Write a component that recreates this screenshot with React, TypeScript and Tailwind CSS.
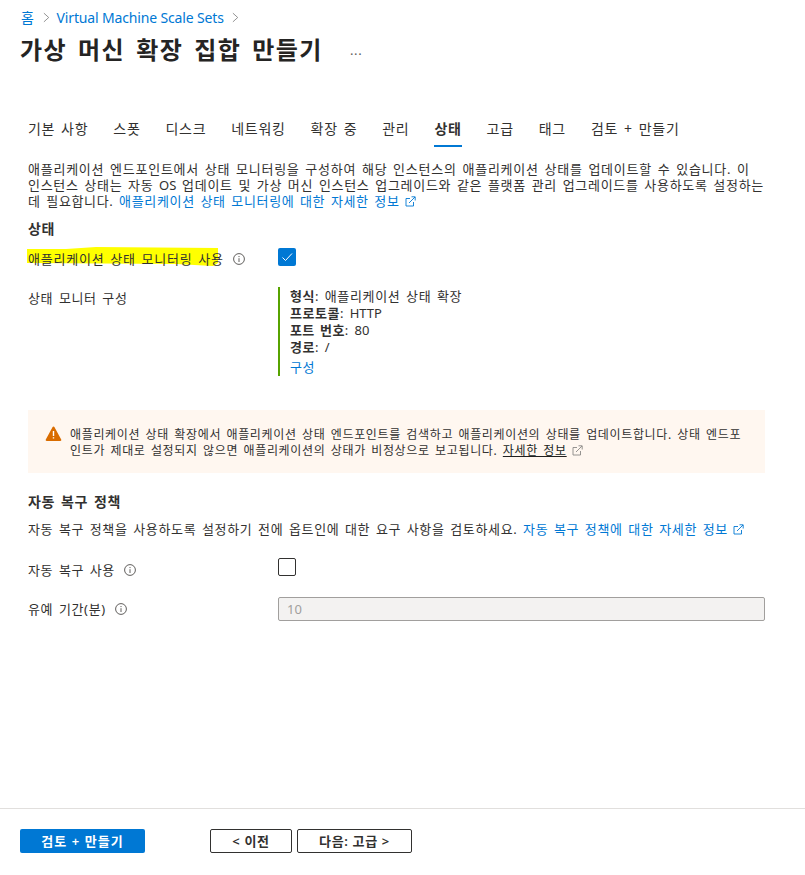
import React from "react";

const font = { fontFamily: '"Noto Sans", "Noto Sans CJK KR", sans-serif' };

function L({ children }: { children: React.ReactNode }) {
  return <span className="tracking-normal [word-spacing:0]">{children}</span>;
}

function Ext({ className = "" }: { className?: string }) {
  return (
    <svg viewBox="0 0 11 11" className={`inline-block w-[11px] h-[11px] ml-[5px] align-[-1px] ${className}`} fill="none" stroke="currentColor" strokeWidth="0.9">
      <path d="M5 2.5H1v7.5h7.5V6" />
      <path d="M4 7l6-6M6.5 .8H10.2V4.5" />
    </svg>
  );
}

function Info() {
  return (
    <svg viewBox="0 0 12 12" className="w-[12px] h-[12px] shrink-0 text-[#605e5c]" fill="none" stroke="currentColor">
      <circle cx="6" cy="6" r="5.4" strokeWidth="1" />
      <path d="M6 5.2V9" strokeWidth="1" />
      <path d="M6 3v1.1" strokeWidth="1" />
    </svg>
  );
}

function Chevron() {
  return (
    <svg viewBox="0 0 8 12" className="w-[7px] h-[11px] text-[#777]" fill="none" stroke="currentColor" strokeWidth="0.9">
      <path d="M1 1l5.5 5L1 11" />
    </svg>
  );
}

const tabs = ["기본 사항", "스폿", "디스크", "네트워킹", "확장 중", "관리", "상태", "고급", "태그", "검토 + 만들기"];

export default function App() {
  return (
    <div style={font} className="relative flex flex-col h-[875px] w-[805px] bg-white text-[#323130] text-[13px] leading-[16px] overflow-hidden tracking-[0.05em] [word-spacing:0.125em]">
      <div className="flex-1 pl-[20px] pr-[40px]">
        <nav className="flex items-center gap-[8px] pt-[9px] h-[26px] text-[14px] text-[#0078d4]">
          <span className="ml-[1px]">홈</span>
          <Chevron />
          <span className="tracking-[-0.15px] [word-spacing:0] -ml-[1px]">Virtual Machine Scale Sets</span>
          <Chevron />
        </nav>
        <div className="flex items-center h-[48px]">
          <h1 className="text-[24px] leading-[32px] font-semibold text-[#252423] tracking-[0.06em] [word-spacing:0.14em]">가상 머신 확장 집합 만들기</h1>
          <span className="ml-[27px] text-[13px] text-[#605e5c]">...</span>
        </div>
        <div className="mt-[37px] ml-[8px] flex gap-[25px] h-[38px] text-[14px] items-start pt-[8px] tracking-[0.05em]">
          {tabs.map((t) =>
            t === "상태" ? (
              <span key={t} className="relative font-semibold leading-[20px]">
                {t}
                <span className="absolute left-0 right-0 top-[26px] h-[2px] bg-[#0078d4]" />
              </span>
            ) : (
              <span key={t} className="leading-[20px]">{t}</span>
            )
          )}
        </div>
        <div className="ml-[8px] mt-[12px] w-[745px]">
          <p>
            <span className="block tracking-[0.058em]">애플리케이션 엔드포인트에서 상태 모니터링을 구성하여 해당 인스턴스의 애플리케이션 상태를 업데이트할 수 있습니다. 이</span>
            <span className="block tracking-[0.054em]">인스턴스 상태는 자동 <L>OS</L> 업데이트 및 가상 머신 인스턴스 업그레이드와 같은 플랫폼 관리 업그레이드를 사용하도록 설정하는</span>
            <span className="block">데 필요합니다.{" "}
            <span className="text-[#0078d4]">애플리케이션 상태 모니터링에 대한 자세한 정보<Ext /></span></span>
          </p>
          <h2 className="mt-[10px] text-[14px] leading-[20px] font-semibold">상태</h2>
          <div className="relative flex mt-[8px] h-[24px] items-center">
            <svg className="absolute left-[-2px] top-[-1px] w-[194px] h-[22px]" viewBox="0 0 194 22">
              <path d="M1 3 L40 3 L70 1 L192 2 L192 17 L187 20 L150 18 L1 17 Z" fill="#ffff00" />
            </svg>
            <div className="relative flex items-center w-[250px] gap-[9px] tracking-[0.06em]">
              <span>애플리케이션 상태 모니터링 사용</span>
              <Info />
            </div>
            <span className="relative w-[18px] h-[18px] rounded-[2px] bg-[#0078d4] flex items-center justify-center -mt-[4px]">
              <svg viewBox="0 0 12 12" className="w-[12px] h-[12px] text-white" fill="none" stroke="currentColor" strokeWidth="1">
                <path d="M1.5 6.5l3 3L11 2.5" />
              </svg>
            </span>
          </div>
          <div className="flex mt-[16px]">
            <div className="w-[250px] pt-[3px]">상태 모니터 구성</div>
            <div className="border-l-[2px] border-[#57a300] pl-[10px] h-[89px] w-[220px] pt-[1px]">
              <div className="leading-[17px]"><b className="font-semibold tracking-[0.04em]">형식</b>: 애플리케이션 상태 확장</div>
              <div className="leading-[17px]"><b className="font-semibold tracking-[0.04em]">프로토콜</b>: <L>HTTP</L></div>
              <div className="leading-[17px]"><b className="font-semibold tracking-[0.03em]">포트 번호</b>: <L>80</L></div>
              <div className="leading-[17px]"><b className="font-semibold tracking-[0.04em]">경로</b>: /</div>
              <div className="mt-[3px] leading-[17px] text-[#0078d4]">구성</div>
            </div>
          </div>
        </div>
        <div className="ml-[8px] mt-[34px] w-[737px] h-[63px] bg-[#fff7f0] flex pl-[17px] pr-[20px] pt-[15px] gap-[8px]">
          <svg viewBox="0 0 16 15" className="w-[17px] h-[15px] shrink-0 mt-[1px]">
            <path d="M8 .5a1 1 0 0 1 .9.5l6.8 12.4a1 1 0 0 1-.9 1.5H1.2a1 1 0 0 1-.9-1.5L7.1 1A1 1 0 0 1 8 .5z" fill="#d96c00" />
            <path d="M8 5v5M8 11.2v1.4" stroke="#fff" strokeWidth="1.4" />
          </svg>
          <p className="text-[12px] leading-[16px] pt-[2px]">
            애플리케이션 상태 확장에서 애플리케이션 상태 엔드포인트를 검색하고 애플리케이션의 상태를 업데이트합니다. 상태 엔드포인트가 제대로 설정되지 않으면 애플리케이션의 상태가 비정상으로 보고됩니다.{" "}
            <span className="underline text-[#201f1e]">자세한 정보</span>
            <Ext className="text-[#8a8886]" />
          </p>
        </div>
        <h2 className="ml-[8px] mt-[19px] text-[14px] leading-[20px] font-semibold">자동 복구 정책</h2>
        <p className="ml-[8px] mt-[9px]">
          자동 복구 정책을 사용하도록 설정하기 전에 옵트인에 대한 요구 사항을 검토하세요.{" "}
          <span className="text-[#0078d4]">자동 복구 정책에 대한 자세한 정보<Ext /></span>
        </p>
        <div className="ml-[8px] flex items-center mt-[19px] h-[24px]">
          <div className="w-[250px] flex items-center gap-[9px] pt-[4px]">
            <span>자동 복구 사용</span>
            <Info />
          </div>
          <span className="w-[18px] h-[18px] rounded-[2px] border border-[#323130] bg-white -mt-[2px]" />
        </div>
        <div className="ml-[8px] flex items-center mt-[17px]">
          <div className="w-[250px] flex items-center gap-[9px]">
            <span>유예 기간(분)</span>
            <Info />
          </div>
          <div className="w-[487px] h-[24px] rounded-[2px] border border-[#a19f9d] bg-[#f3f2f1] text-[#a19f9d] pl-[8px] flex items-center"><L>10</L></div>
        </div>
      </div>
      <footer className="h-[67px] border-t border-[#e1dfdd] pl-[20px] pt-[20px] flex items-start">
        <button className="w-[125px] h-[24px] rounded-[2px] bg-[#0078d4] text-white font-semibold tracking-[0.08em]">검토 + 만들기</button>
        <button className="ml-[65px] w-[82px] h-[24px] rounded-[2px] border border-[#323130] font-semibold">&lt; 이전</button>
        <button className="ml-[5px] w-[115px] h-[24px] rounded-[2px] border border-[#323130] font-semibold">다음: 고급 &gt;</button>
      </footer>
    </div>
  );
}
